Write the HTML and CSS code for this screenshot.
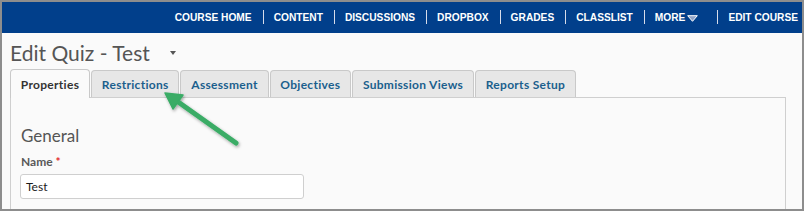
FILE: index.html
```html
<!DOCTYPE html>
<html lang="en">
<head>
<meta charset="utf-8">
<title>Edit Quiz - Test</title>
<link rel="stylesheet" href="styles.css">
</head>
<body>
<div class="frame">
  <nav class="topbar">
    <a class="nav-item">COURSE HOME</a><span class="sep"></span>
    <a class="nav-item">CONTENT</a><span class="sep"></span>
    <a class="nav-item">DISCUSSIONS</a><span class="sep"></span>
    <a class="nav-item">DROPBOX</a><span class="sep"></span>
    <a class="nav-item">GRADES</a><span class="sep"></span>
    <a class="nav-item">CLASSLIST</a><span class="sep"></span>
    <a class="nav-item more">MORE<svg class="more-tri" width="11" height="7" viewBox="0 0 11 7"><path d="M0.7 0.7 H10.3 L5.5 6.3 Z" fill="#8fa3c8" stroke="#ffffff" stroke-width="1"/></svg></a><span class="sep"></span>
    <a class="nav-item last">EDIT COURSE</a>
  </nav>
  <main class="page">
    <div class="title-row">
      <h1 class="title">Edit Quiz - Test</h1>
      <span class="caret"></span>
    </div>
    <div class="tabs">
      <div class="tab active">Properties</div>
      <div class="tab">Restrictions</div>
      <div class="tab">Assessment</div>
      <div class="tab">Objectives</div>
      <div class="tab">Submission Views</div>
      <div class="tab">Reports Setup</div>
    </div>
    <section class="panel">
      <h2 class="section-title">General</h2>
      <div class="field-label">Name <span class="req">*</span></div>
      <div class="text-input">Test</div>
    </section>
  </main>
  <svg class="arrow" width="800" height="207" viewBox="0 0 800 207">
    <defs>
      <filter id="sh" x="-20%" y="-20%" width="140%" height="140%">
        <feDropShadow dx="1" dy="1.5" stdDeviation="1.5" flood-color="#000" flood-opacity="0.35"/>
      </filter>
    </defs>
    <g filter="url(#sh)" transform="translate(-2,-2)">
      <line x1="236" y1="143" x2="174" y2="99" stroke="#3aac66" stroke-width="5" stroke-linecap="round"/>
      <path d="M165 93 L183 95 L173 109 Z" fill="#3aac66" stroke="#3aac66" stroke-width="1.5" stroke-linejoin="round"/>
    </g>
  </svg>
</div>
</body>
</html>
```

FILE: styles.css
```css
html, body {
  margin: 0;
  padding: 0;
  background: #ffffff;
}

.frame {
  position: relative;
  width: 804px;
  height: 211px;
  box-sizing: border-box;
  border: 2px solid #8d8d8d;
  background: #fafafa;
  overflow: hidden;
  font-family: Lato, "Open Sans", sans-serif;
}

.topbar {
  display: flex;
  justify-content: flex-end;
  align-items: center;
  height: 31px;
  background: #013f8b;
  padding-right: 4px;
}

.nav-item {
  font-family: "Liberation Sans", Arial, sans-serif;
  font-weight: bold;
  font-size: 10.2px;
  color: #ffffff;
  padding: 0 11px 0 10px;
  line-height: 31px;
  display: flex;
  align-items: center;
  white-space: nowrap;
}

.nav-item.last {
  padding-right: 0;
}

.nav-item.more {
  padding-right: 19px;
}

.more-tri {
  margin-left: 2px;
  margin-top: 1px;
}

.sep {
  width: 1px;
  height: 14px;
  background: #d6dcea;
  margin-top: -1px;
}

.page {
  padding: 7px 0 0 8px;
}

.title-row {
  display: flex;
  align-items: center;
  height: 25px;
}

.title {
  margin: 0;
  font-size: 21px;
  font-weight: 400;
  color: #555555;
  line-height: 25px;
}

.caret {
  width: 0;
  height: 0;
  border-left: 3.5px solid transparent;
  border-right: 3.5px solid transparent;
  border-top: 4px solid #555555;
  margin-left: 20px;
}

.tabs {
  display: flex;
  gap: 1px;
  margin-top: 4px;
  height: 28px;
  align-items: flex-end;
}

.tab {
  height: 27px;
  box-sizing: border-box;
  border: 1px solid #c9c9c9;
  border-bottom: none;
  border-radius: 4px 4px 0 0;
  background: #e7e7e7;
  color: #1b5f8d;
  font-weight: 700;
  font-size: 12px;
  letter-spacing: 0.3px;
  padding: 0 9.8px;
  line-height: 27px;
  white-space: nowrap;
}

.tab.active {
  position: relative;
  z-index: 1;
  height: 29px;
  margin-bottom: -1px;
  line-height: 29px;
  background: #fafafa;
  color: #333333;
}

.panel {
  width: 776px;
  height: 120px;
  box-sizing: border-box;
  border: 1px solid #cfcfcf;
  padding: 28px 10px 0 10px;
  background: #fafafa;
}

.section-title {
  margin: 0;
  font-size: 17px;
  font-weight: 400;
  color: #555555;
  line-height: 20px;
}

.field-label {
  margin-top: 9px;
  font-size: 12px;
  font-weight: 700;
  color: #595959;
  line-height: 13px;
}

.req {
  color: #e3262b;
  font-weight: bold;
}

.text-input {
  margin-top: 6px;
  margin-left: -1px;
  width: 284px;
  height: 25px;
  box-sizing: border-box;
  border: 1px solid #cfcfcf;
  border-radius: 3px;
  background: #ffffff;
  font-size: 12px;
  color: #1a1a1a;
  padding-left: 5px;
  line-height: 23px;
}

.arrow {
  position: absolute;
  left: 0;
  top: 0;
  pointer-events: none;
}
```
